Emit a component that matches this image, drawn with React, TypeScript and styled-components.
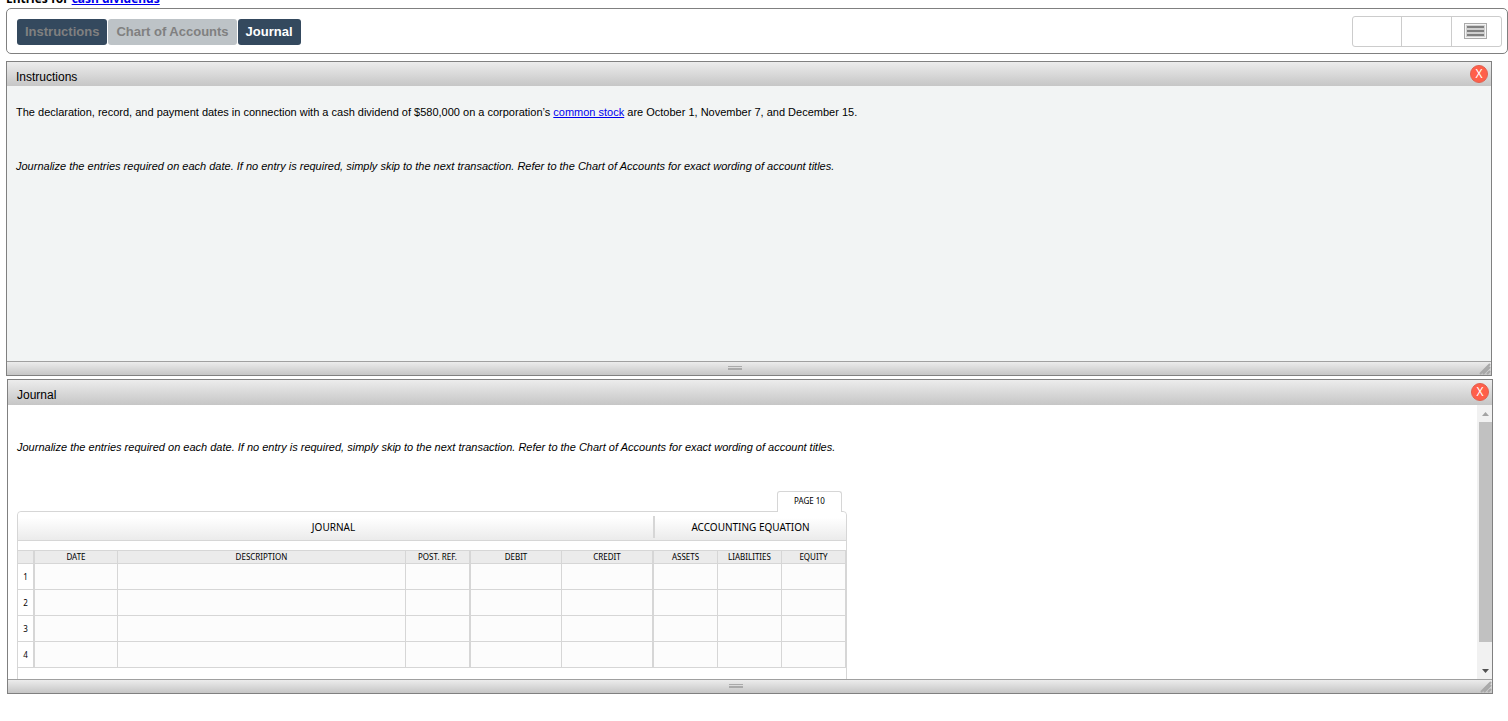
import React from 'react';
import styled, { createGlobalStyle } from 'styled-components';

const GlobalStyle = createGlobalStyle`
  *, *::before, *::after { box-sizing: border-box; }
  body {
    margin: 0;
    background: #fff;
    color: #000;
    font-family: "Liberation Sans", Arial, sans-serif;
    font-size: 11px;
  }
  button { font: inherit; padding: 0; border: 0; background: none; }
  a { color: #0000ee; }
`;

const Page = styled.main`
  padding-left: 6px;
  overflow: hidden;
`;

const Title = styled.h1`
  display: flex;
  align-items: flex-end;
  height: 8px;
  margin: 0;
  overflow: hidden;
  font: bold 12px/19px "Noto Sans", sans-serif;
  white-space: pre;
`;

const Toolbar = styled.div`
  display: flex;
  align-items: center;
  justify-content: space-between;
  height: 46px;
  padding: 0 5px 0 10px;
  border: 1px solid #808080;
  border-radius: 5px;
`;

const Tabs = styled.nav`
  display: flex;
  gap: 1px;
  padding-top: 2px;
`;

const TabButton = styled.button<{ $tone: 'dark' | 'light'; $active?: boolean }>`
  height: 26px;
  padding: 0 8px;
  border-radius: 3px;
  font-size: 13px;
  font-weight: bold;
  line-height: 26px;
  background: ${(p) => (p.$tone === 'dark' ? '#34495e' : '#bdc3c7')};
  color: ${(p) => (p.$active ? '#fff' : '#808080')};
`;

const Tools = styled.div`
  display: flex;
  height: 31px;
  border: 1px solid #ccc;
  border-radius: 3px;
`;

const ToolButton = styled.button`
  display: flex;
  align-items: center;
  justify-content: center;
  width: 50px;
  padding-right: 3px;
  & + & { border-left: 1px solid #ccc; }
  &:first-child { width: 48px; }
`;

const Panel = styled.section<{ $inset?: boolean }>`
  margin: ${(p) => (p.$inset ? '3px 15px 0 1px' : '7px 16px 0 0')};
  border: 1px solid #808080;
`;

const PanelHeader = styled.header<{ $tall?: boolean }>`
  display: flex;
  align-items: flex-start;
  justify-content: space-between;
  height: ${(p) => (p.$tall ? 25 : 24)}px;
  padding: 3px 3px 0 9px;
  background: linear-gradient(#ececec, #c6c6c6);
`;

const PanelTitle = styled.h2`
  margin: 0;
  padding-top: 4px;
  font-size: 12px;
  font-weight: normal;
  line-height: 16px;
`;

const CloseButton = styled.button`
  width: 18px;
  height: 18px;
  border: 1px solid #e0604f;
  border-radius: 50%;
  background: #ff5f4a;
  color: #fff;
  font: 12px/16px "Noto Sans", sans-serif;
`;

const PanelBody = styled.div<{ $shade?: boolean }>`
  display: flex;
  height: ${(p) => (p.$shade ? 275 : 274)}px;
  background: ${(p) => (p.$shade ? '#f2f4f4' : '#fff')};
  overflow: hidden;
`;

const Content = styled.div<{ $top: number }>`
  flex: 1;
  min-width: 0;
  padding: ${(p) => p.$top}px 9px 0;
`;

const Text = styled.p`
  margin: 0 0 38px;
  line-height: 16px;
`;

const Directions = styled(Text)`
  margin-bottom: 36px;
  font-style: italic;
`;

const PanelFooter = styled.footer`
  display: grid;
  grid-template-columns: 1fr auto 1fr;
  align-items: center;
  height: 14px;
  border-top: 1px solid #a0a0a0;
  background: linear-gradient(#ececec, #c6c6c6);
`;

const Handle = styled.span`
  grid-column: 2;
  width: 14px;
  height: 4px;
  margin: 0 28px 2px 0;
  border: solid #aaa;
  border-width: 1px 0 2px;
`;

const Corner = styled.svg`
  justify-self: end;
  align-self: end;
  display: block;
`;

const Ledger = styled.div`
  width: 830px;
  font-family: "Noto Sans", sans-serif;
`;

const PageTab = styled.div`
  position: relative;
  width: 65px;
  height: 21px;
  margin: 0 5px -1px auto;
  border: 1px solid #d6d6d6;
  border-bottom: 0;
  border-radius: 3px 3px 0 0;
  background: #fff;
  font-size: 8px;
  line-height: 18px;
  text-align: center;
`;

const LedgerBox = styled.div`
  height: 200px;
  border: 1px solid #d6d6d6;
  border-radius: 4px 4px 0 0;
`;

const LedgerHead = styled.div`
  display: flex;
  align-items: center;
  height: 29px;
  margin-bottom: 9px;
  padding-top: 2px;
  border-bottom: 1px solid #d6d6d6;
  border-radius: 4px 4px 0 0;
  background: linear-gradient(#fff 20%, #ebebeb);
  font-size: 10px;
  line-height: 22px;
  text-align: center;
`;

const LedgerName = styled.div`
  flex: 1;
  padding-right: 4px;
`;

const EquationName = styled.div`
  width: 193px;
  border-left: 2px solid #d6d6d6;
`;

const Table = styled.table`
  width: 100%;
  table-layout: fixed;
  border-collapse: separate;
  border-spacing: 0;
  border-top: 1px solid #d6d6d6;
  font-size: 8px;
`;

const Cell = styled.td<{ $double?: boolean }>`
  height: 26px;
  padding: 0;
  border: solid #d6d6d6;
  border-width: 0 ${(p) => (p.$double ? 2 : 1)}px 1px 0;
  background: #fcfcfc;
`;

const HeadCell = styled(Cell)`
  height: 13px;
  background: #ebebeb;
  font-weight: normal;
  line-height: 12px;
`;

const RowNumber = styled(Cell)`
  background: #fff;
  font-weight: normal;
  text-align: center;
`;

const ScrollBar = styled.div`
  display: flex;
  flex-direction: column;
  width: 15px;
  padding-left: 2px;
  background: #f1f1f1;
`;

const ScrollArrow = styled.button`
  display: flex;
  align-items: center;
  justify-content: center;
  height: 17px;
`;

const ScrollTrack = styled.div`
  flex: 1;
`;

const ScrollThumb = styled.div`
  height: 220px;
  background: #c1c1c1;
`;

const columns = [
  { name: 'DATE', width: 83 },
  { name: 'DESCRIPTION', width: 288 },
  { name: 'POST. REF.', width: 65, double: true },
  { name: 'DEBIT', width: 91 },
  { name: 'CREDIT', width: 92, double: true },
  { name: 'ASSETS', width: 64 },
  { name: 'LIABILITIES', width: 64 },
  { name: 'EQUITY', width: 64 },
];

const directions =
  'Journalize the entries required on each date. If no entry is required, simply skip to the next transaction. Refer to the Chart of Accounts for exact wording of account titles.';

function ResizeBar() {
  return (
    <PanelFooter>
      <Handle />
      <Corner width="12" height="12" aria-hidden="true">
        <path d="M1 11L11 1M4 11L11 4M8 11L11 8" stroke="#a8a8a8" strokeWidth="2" />
      </Corner>
    </PanelFooter>
  );
}

function Journal() {
  return (
    <Ledger>
      <PageTab>PAGE 10</PageTab>
      <LedgerBox>
        <LedgerHead>
          <LedgerName>JOURNAL</LedgerName>
          <EquationName>ACCOUNTING EQUATION</EquationName>
        </LedgerHead>
        <Table>
          <colgroup>
            <col width={17} />
            {columns.map((c) => <col key={c.name} width={c.width} />)}
          </colgroup>
          <thead>
            <tr>
              <HeadCell $double />
              {columns.map((c) => (
                <HeadCell as="th" scope="col" key={c.name} $double={c.double}>{c.name}</HeadCell>
              ))}
            </tr>
          </thead>
          <tbody>
            {[1, 2, 3, 4].map((n) => (
              <tr key={n}>
                <RowNumber as="th" scope="row" $double>{n}</RowNumber>
                {columns.map((c) => <Cell key={c.name} $double={c.double} />)}
              </tr>
            ))}
          </tbody>
        </Table>
      </LedgerBox>
    </Ledger>
  );
}

export default function App() {
  return (
    <>
      <GlobalStyle />
      <Page>
        <Title>Entries for <a href="#dividends">cash dividends</a></Title>
        <Toolbar>
          <Tabs>
            <TabButton $tone="dark">Instructions</TabButton>
            <TabButton $tone="light">Chart of Accounts</TabButton>
            <TabButton $tone="dark" $active>Journal</TabButton>
          </Tabs>
          <Tools>
            <ToolButton aria-label="Previous" />
            <ToolButton aria-label="Next" />
            <ToolButton aria-label="Menu">
              <svg width="23" height="16" aria-hidden="true">
                <rect x="0.5" y="0.5" width="22" height="15" fill="#f4f4f4" stroke="#aaa" />
                <rect x="2" y="2" width="19" height="12" fill="#d0d0d0" />
                <path d="M3 4H20M3 8H20M3 12H20" stroke="#808080" strokeWidth="2" />
              </svg>
            </ToolButton>
          </Tools>
        </Toolbar>

        <Panel>
          <PanelHeader>
            <PanelTitle>Instructions</PanelTitle>
            <CloseButton aria-label="Close Instructions">X</CloseButton>
          </PanelHeader>
          <PanelBody $shade>
            <Content $top={18}>
              <Text>
                The declaration, record, and payment dates in connection with a cash dividend of $580,000 on a
                corporation’s <a href="#stock">common stock</a> are October 1, November 7, and December 15.
              </Text>
              <Directions>{directions}</Directions>
            </Content>
          </PanelBody>
          <ResizeBar />
        </Panel>

        <Panel $inset>
          <PanelHeader $tall>
            <PanelTitle>Journal</PanelTitle>
            <CloseButton aria-label="Close Journal">X</CloseButton>
          </PanelHeader>
          <PanelBody>
            <Content $top={34}>
              <Directions>{directions}</Directions>
              <Journal />
            </Content>
            <ScrollBar>
              <ScrollArrow aria-label="Scroll up">
                <svg width="7" height="4" aria-hidden="true"><path d="M0 4L3.500 0L7 4Z" fill="#a3a3a3" /></svg>
              </ScrollArrow>
              <ScrollTrack><ScrollThumb /></ScrollTrack>
              <ScrollArrow aria-label="Scroll down">
                <svg width="7" height="4" aria-hidden="true"><path d="M0 0L3.500 4L7 0Z" fill="#505050" /></svg>
              </ScrollArrow>
            </ScrollBar>
          </PanelBody>
          <ResizeBar />
        </Panel>
      </Page>
    </>
  );
}
